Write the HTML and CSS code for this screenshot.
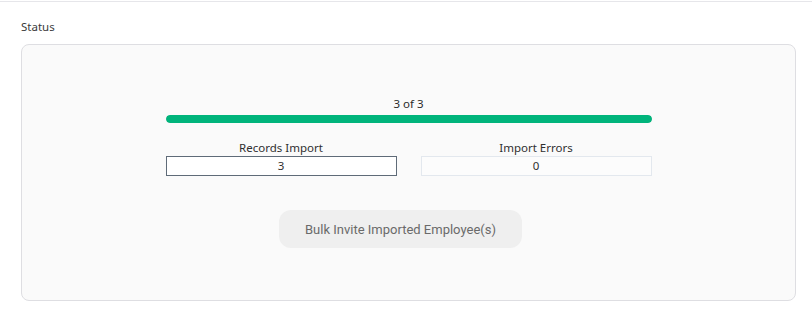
FILE: index.html
```html
<!DOCTYPE html>
<html lang="en">
<head>
    <meta charset="UTF-8">
    <meta name="viewport" content="width=device-width, initial-scale=1.0">
    <title>Import Status</title>
    <link rel="stylesheet" href="styles.css">
</head>
<body>
    <div class="page">
        <div class="section-label">Status</div>
        <div class="status-panel">
            <div class="progress">
                <div class="progress-text">3 of 3</div>
                <div class="progress-track">
                    <div class="progress-fill" style="width: 100%;"></div>
                </div>
            </div>
            <div class="counts">
                <div class="count">
                    <div class="count-label">Records Import</div>
                    <div class="count-box active">3</div>
                </div>
                <div class="count">
                    <div class="count-label">Import Errors</div>
                    <div class="count-box">0</div>
                </div>
            </div>
            <button class="invite-btn" disabled>Bulk Invite Imported Employee(s)</button>
        </div>
    </div>
</body>
</html>
```

FILE: styles.css
```css
html, body {
    margin: 0;
    padding: 0;
    background: #ffffff;
}
body {
    font-family: "Noto Sans", "Open Sans", sans-serif;
    color: #333;
    overflow: hidden;
}
.page {
    border-top: 1px solid #e6e6ea;
    margin-top: 1px;
    padding: 17px 16px 0 21px;
    height: 316px;
    box-sizing: border-box;
}
.section-label {
    font-size: 11.5px;
    color: #3a3a3a;
    line-height: 16px;
    height: 16px;
    margin-bottom: 9px;
}
.status-panel {
    background: #fafafa;
    border: 1px solid #dedee2;
    border-radius: 8px;
    width: 775px;
    height: 257px;
    box-sizing: border-box;
    display: flex;
    flex-direction: column;
    align-items: center;
    padding-top: 51px;
}
.progress {
    width: 486px;
    text-align: center;
}
.progress-text {
    font-size: 11.5px;
    line-height: 16px;
    color: #2b2b2b;
    margin-bottom: 3px;
}
.progress-track {
    height: 8px;
    border-radius: 4px;
    background: #e6e6e6;
    overflow: hidden;
}
.progress-fill {
    height: 100%;
    background: #00b47b;
    border-radius: 4px;
}
.counts {
    display: flex;
    gap: 24px;
    margin-top: 17px;
}
.count {
    width: 231px;
    text-align: center;
}
.count-label {
    font-size: 11.5px;
    line-height: 16px;
    color: #2f2f2f;
}
.count-box {
    height: 20px;
    box-sizing: border-box;
    border: 1px solid #e3e8ee;
    background: #fcfcfc;
    font-size: 11.5px;
    line-height: 18px;
    color: #2f2f2f;
}
.count-box.active {
    border-color: #5f6b78;
    background: #ffffff;
}
.invite-btn {
    margin-top: 34px;
    margin-right: 16px;
    width: 243px;
    height: 38px;
    border: none;
    border-radius: 12px;
    background: #efefef;
    color: #6a6a6a;
    font-family: Roboto, "Noto Sans", sans-serif;
    font-size: 13px;
    cursor: default;
}
```
